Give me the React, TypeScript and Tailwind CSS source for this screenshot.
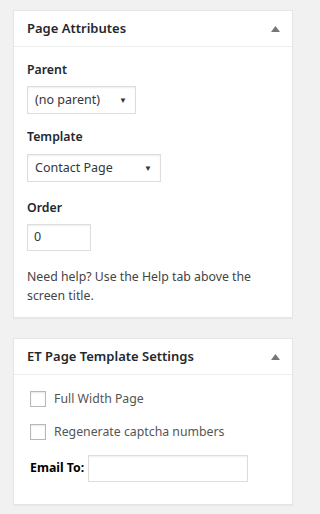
import React from "react";

function Caret() {
  return (
    <svg width="9" height="6" viewBox="0 0 9 6" className="fill-[#72777c]">
      <path d="M4.5 0 L9 6 L0 6 Z" />
    </svg>
  );
}

function Panel({ title, children }: { title: string; children: React.ReactNode }) {
  return (
    <div className="bg-white border border-[#e5e5e5] shadow-[0_1px_1px_rgba(0,0,0,0.04)]">
      <div className="h-[36px] flex items-center justify-between pl-[13px] pr-[12px] border-b border-[#eeeeee]">
        <h2 className="text-[13px] font-semibold text-[#23282d]">{title}</h2>
        <Caret />
      </div>
      {children}
    </div>
  );
}

function SelectBox({ value, width }: { value: string; width: string }) {
  return (
    <div
      className={`${width} h-[28px] border border-[#dddddd] shadow-[inset_0_1px_2px_rgba(0,0,0,0.07)] flex items-center justify-between pl-[7px] pr-[8px] text-[12.5px] text-[#32373c]`}
    >
      <span>{value}</span>
      <span className="text-[8px] text-[#32373c]">▼</span>
    </div>
  );
}

export default function App() {
  return (
    <div
      className="min-h-[514px] bg-[#f1f1f1] pt-[10px] pl-[13px] pr-[6px]"
      style={{ fontFamily: '"Noto Sans", "Open Sans", sans-serif' }}
    >
      <div className="w-[280px] flex flex-col gap-[20px]">
        <Panel title="Page Attributes">
          <div className="px-[13px] pt-[13px] pb-[12px] text-[12.3px] text-[#444]">
            <p className="font-semibold text-[#23282d] leading-[20px]">Parent</p>
            <div className="mt-[6px]">
              <SelectBox value="(no parent)" width="w-[109px]" />
            </div>
            <p className="mt-[13px] font-semibold text-[#23282d] leading-[20px]">Template</p>
            <div className="mt-[7px]">
              <SelectBox value="Contact Page" width="w-[134px]" />
            </div>
            <p className="mt-[16px] font-semibold text-[#23282d] leading-[20px]">Order</p>
            <div className="mt-[6px] w-[64px] h-[27px] border border-[#dddddd] shadow-[inset_0_1px_2px_rgba(0,0,0,0.07)] flex items-center pl-[6px] text-[12.5px] text-[#32373c]">
              0
            </div>
            <p className="mt-[16px] leading-[19px] text-[#444]">
              Need help? Use the Help tab above the screen title.
            </p>
          </div>
        </Panel>
        <Panel title="ET Page Template Settings">
          <div className="px-[16px] pt-[16px] pb-[22px] text-[12.3px]">
            <label className="h-[16px] leading-[16px] flex items-center gap-[8px] text-[#555]">
              <span className="w-[16px] h-[16px] border border-[#b4b9be] bg-white shadow-[inset_0_1px_2px_rgba(0,0,0,0.1)]" />
              Full Width Page
            </label>
            <label className="mt-[17px] h-[16px] leading-[16px] flex items-center gap-[8px] text-[#555]">
              <span className="w-[16px] h-[16px] border border-[#b4b9be] bg-white shadow-[inset_0_1px_2px_rgba(0,0,0,0.1)]" />
              Regenerate captcha numbers
            </label>
            <div className="mt-[15px] h-[27px] flex items-center gap-[4px]">
              <span className="font-bold text-black">Email To:</span>
              <div className="w-[160px] h-[27px] border border-[#dddddd] shadow-[inset_0_1px_2px_rgba(0,0,0,0.07)]" />
            </div>
          </div>
        </Panel>
      </div>
    </div>
  );
}
